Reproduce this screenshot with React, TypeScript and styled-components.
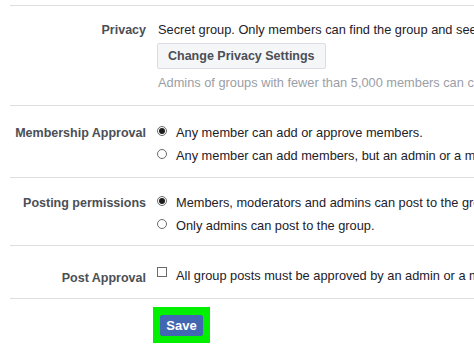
import React from "react";
import styled, { createGlobalStyle } from "styled-components";

const Global = createGlobalStyle`
  html, body { margin: 0; padding: 0; background: #fff; overflow: hidden; }
  body { font-family: "Liberation Sans", Arial, sans-serif; }
`;

const Page = styled.div`
  width: 474px;
  height: 355px;
  padding-top: 5px;
  padding-left: 10px;
  box-sizing: border-box;
  overflow: hidden;
  white-space: nowrap;
`;

const Row = styled.div<{ $pt: number; $h: number }>`
  display: grid;
  grid-template-columns: 136px 1fr;
  column-gap: 11px;
  border-top: 1px solid #dcdee2;
  padding-top: ${(p) => p.$pt}px;
  height: ${(p) => p.$h}px;
  box-sizing: border-box;
`;

const Label = styled.div<{ $mt?: number }>`
  text-align: right;
  font-weight: bold;
  font-size: 12.5px;
  line-height: 16px;
  color: #4b4f56;
  margin-top: ${(p) => p.$mt ?? 0}px;
`;

const Content = styled.div`
  display: flex;
  flex-direction: column;
  align-items: flex-start;
  min-width: 0;
  overflow: hidden;
`;

const Text = styled.div`
  font-size: 12.8px;
  line-height: 16px;
  color: #1d2129;
  padding-left: 1px;
`;

const Hint = styled.div`
  font-size: 12.8px;
  line-height: 16px;
  color: #9a9ea6;
  margin-top: 6px;
  padding-left: 1px;
`;

const GrayButton = styled.button`
  margin-top: 5px;
  height: 26px;
  padding: 0 10px;
  background: #f5f6f7;
  border: 1px solid #dadde1;
  border-radius: 2px;
  font-family: "Liberation Sans", Arial, sans-serif;
  font-weight: bold;
  font-size: 12.5px;
  color: #4b4f56;
`;

const Option = styled.label`
  display: flex;
  align-items: center;
  gap: 9px;
  height: 23px;
  font-size: 12.8px;
  color: #1d2129;
`;

const Radio = styled.span<{ $on?: boolean }>`
  width: 10px;
  height: 10px;
  border: 1px solid #6a6a6a;
  border-radius: 50%;
  box-sizing: border-box;
  display: inline-flex;
  align-items: center;
  justify-content: center;
  flex: none;
  margin-top: -3px;
  &::after {
    content: "";
    width: 6px;
    height: 6px;
    border-radius: 50%;
    background: ${(p) => (p.$on ? "#1d1d1d" : "transparent")};
  }
`;

const Check = styled.span`
  width: 10px;
  height: 10px;
  border: 1px solid #6a6a6a;
  box-sizing: border-box;
  flex: none;
  margin-top: -8px;
`;

const SaveRow = styled.div`
  border-top: 1px solid #dcdee2;
  display: grid;
  grid-template-columns: 136px 1fr;
  column-gap: 7px;
  padding-top: 8px;
`;

const Highlight = styled.div`
  justify-self: start;
  background: #00f000;
  padding: 8px 7px 7px 7px;
`;

const SaveButton = styled.button`
  display: block;
  background: #4267b2;
  border: 1px solid #4267b2;
  border-radius: 2px;
  color: #fff;
  font-family: "Liberation Sans", Arial, sans-serif;
  font-weight: bold;
  font-size: 13px;
  height: 21px;
  width: 43px;
  padding: 0;
`;

export default function App() {
  return (
    <>
      <Global />
      <Page>
        <Row $pt={16} $h={100}>
          <Label>Privacy</Label>
          <Content>
            <Text>Secret group. Only members can find the group and see posts.</Text>
            <GrayButton>Change Privacy Settings</GrayButton>
            <Hint>Admins of groups with fewer than 5,000 members can change privacy settings.</Hint>
          </Content>
        </Row>
        <Row $pt={15} $h={72}>
          <Label $mt={4}>Membership Approval</Label>
          <Content>
            <Option><Radio $on />Any member can add or approve members.</Option>
            <Option><Radio />Any member can add members, but an admin or a moderator must approve them.</Option>
          </Content>
        </Row>
        <Row $pt={13} $h={68}>
          <Label $mt={4}>Posting permissions</Label>
          <Content>
            <Option><Radio $on />Members, moderators and admins can post to the group.</Option>
            <Option><Radio />Only admins can post to the group.</Option>
          </Content>
        </Row>
        <Row $pt={18} $h={53}>
          <Label $mt={6}>Post Approval</Label>
          <Content>
            <Option><Check />All group posts must be approved by an admin or a moderator.</Option>
          </Content>
        </Row>
        <SaveRow>
          <span />
          <Highlight>
            <SaveButton>Save</SaveButton>
          </Highlight>
        </SaveRow>
      </Page>
    </>
  );
}
